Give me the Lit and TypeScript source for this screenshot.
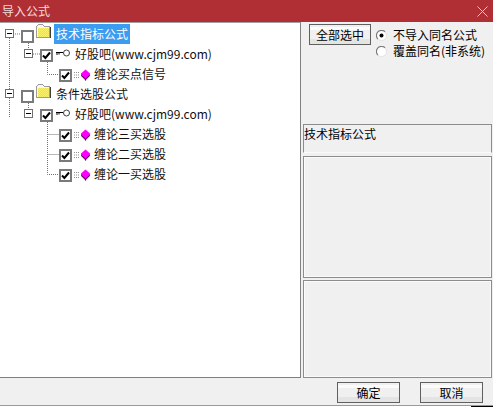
import { LitElement, html, css, svg } from "lit";
import { customElement } from "lit/decorators.js";

type Row = { level: 0 | 1 | 2; label: string; checked: boolean; selected?: boolean };

const rows: Row[] = [
  { level: 0, label: "技术指标公式", checked: false, selected: true },
  { level: 1, label: "好股吧(www.cjm99.com)", checked: true },
  { level: 2, label: "缠论买点信号", checked: true },
  { level: 0, label: "条件选股公式", checked: false },
  { level: 1, label: "好股吧(www.cjm99.com)", checked: true },
  { level: 2, label: "缠论三买选股", checked: true },
  { level: 2, label: "缠论二买选股", checked: true },
  { level: 2, label: "缠论一买选股", checked: true },
];

const folder = html`<svg class="ico folder" width="16" height="14" viewBox="0 0 16 14" shape-rendering="crispEdges">
  <defs>
    <pattern id="dither" width="2" height="2" patternUnits="userSpaceOnUse">
      <rect width="2" height="2" fill="#fbf06a"/>
      <rect width="1" height="1" fill="#d8d8b8"/>
      <rect x="1" y="1" width="1" height="1" fill="#d8d8b8"/>
    </pattern>
  </defs>
  <path d="M1.5 13.5V2.5L3.5 .5H7.5L9.5 2.5H14.5V13.5Z" fill="#f6f6f6" stroke="#9a9a9a"/>
  <rect x="3" y="4" width="11" height="9" fill="url(#dither)"/>
  <path d="M15.5 3v11H2" fill="none" stroke="#404040"/>
</svg>`;

const key = html`<svg class="ico key" width="16" height="8" viewBox="0 0 16 8">
  <circle cx="11.5" cy="4" r="3" fill="#fff" stroke="#404040"/>
  <path d="M8 3.5H1M2 3.5V6M4 3.5V5.5" stroke="#000" fill="none"/>
</svg>`;

const gem = html`<svg class="ico gem" width="16" height="12" viewBox="0 0 16 12">
  <path d="M0 3.5H6M0 6H6M0 8.5H6" stroke="#909090" stroke-dasharray="1 1"/>
  <path d="M11.5 .5L16 4.5V7L11.5 11.5L7 7V4.5Z" fill="#ff00ff"/>
  <path d="M7.5 6.5L11.5 10L15.5 6.5" fill="none" stroke="#500050"/>
  <path d="M11.5 10V11.5" stroke="#500050"/>
</svg>`;

const treeLines = svg`
  <path d="M9.5 38V90M9.5 98V118
           M13 34H21M33 54H40
           M28.5 43V50M28.5 103V110
           M47.5 62V74.5H59
           M47.5 122V174.5H59M47.5 134.5H59M47.5 154.5H59" 
        fill="none" stroke="#707070" stroke-dasharray="1 1"/>`;

const radio = (on: boolean) => html`<svg width="11" height="11" viewBox="0 0 11 11">
  <circle cx="5.5" cy="5.5" r="4.5" fill="#fff"/>
  <path d="M1.9 9.1A5 5 0 0 1 9.1 1.9" fill="none" stroke="#7a7a7a" stroke-width="1.2"/>
  <path d="M9.1 1.9A5 5 0 0 1 1.9 9.1" fill="none" stroke="#e4e4e4" stroke-width="1"/>
  ${on ? svg`<circle cx="5.5" cy="5.5" r="2" fill="#000"/>` : ""}
</svg>`;

@customElement("app-root")
export class AppRoot extends LitElement {
  static styles = css`
    :host {
      display: block;
      width: 493px;
      height: 407px;
      overflow: hidden;
      font-family: "Noto Sans CJK SC", "Liberation Sans", sans-serif;
      font-size: 12px;
      color: #000;
    }
    .win {
      height: 407px;
      display: flex;
      flex-direction: column;
      background: #f0f0f0;
    }
    .title {
      height: 22px;
      flex: none;
      background: #b02f35;
      color: #f4dcdc;
      display: flex;
      align-items: center;
      justify-content: space-between;
      padding: 0 5px 0 2px;
      line-height: 20px;
    }
    .title svg { display: block; }
    .main {
      flex: none;
      height: 356px;
      display: flex;
    }
    .tree {
      position: relative;
      width: 301px;
      flex: none;
      box-sizing: border-box;
      height: 356px;
      background: #fff;
      border-top: 1px solid #a0a0a0;
      border-right: 1px solid #808080;
      border-bottom: 1px solid #808080;
      padding-top: 1px;
    }
    .lines {
      position: absolute;
      left: 0;
      top: -23px;
      pointer-events: none;
    }
    .row {
      height: 20px;
      display: flex;
      align-items: center;
      white-space: nowrap;
      position: relative;
    }
    .l0 { padding-left: 5px; }
    .l1 { padding-left: 24px; }
    .l2 { padding-left: 59px; }
    .exp {
      width: 9px;
      height: 9px;
      box-sizing: border-box;
      border: 1px solid #707070;
      background: #fff;
      display: flex;
      align-items: center;
      justify-content: center;
      flex: none;
    }
    .exp::before {
      content: "";
      width: 5px;
      height: 1px;
      background: #000;
    }
    .l0 .exp { margin-right: 7px; margin-top: -1px; }
    .l1 .exp { margin-right: 7px; margin-top: -1px; }
    .chk {
      width: 13px;
      height: 13px;
      box-sizing: border-box;
      border: 2px solid #7a7a7a;
      background: #fff;
      flex: none;
      display: flex;
      align-items: center;
      justify-content: center;
      margin-top: 3px;
    }
    .chk svg { display: block; }
    .l0 .chk { margin-top: 4px; }
    .ico { flex: none; display: block; }
    .folder { margin: -7px 0 0 1px; }
    .key { margin: -3px 4px 0 2px; }
    .gem { margin: 1px 4px 0 2px; }
    .label {
      line-height: 20px;
      padding: 0 2px;
      color: #111;
    }
    .l1 .label, .l2 .label { padding: 0; }
    .l0 .label { margin-left: 3px; }
    .label.sel {
      background: #3b9cf0;
      color: #fff;
    }
    .side {
      flex: 1;
      display: flex;
      flex-direction: column;
      padding: 1px 1px 0 2px;
      min-width: 0;
    }
    .top {
      height: 101px;
      flex: none;
      display: flex;
      align-items: flex-start;
      gap: 5px;
      padding-left: 6px;
    }
    .btn {
      box-sizing: border-box;
      font: inherit;
      color: #000;
      border: 1px solid #606060;
      outline: none;
      padding: 0;
      background: linear-gradient(#f0f0f0 0 2px, #fbfbfb 2px 5px, #f0f0f0 5px 14px, #e4e4e2 14px);
      height: 21px;
      line-height: 18px;
    }
    .all { width: 62px; margin-top: 1px; }
    .opts {
      display: flex;
      flex-direction: column;
      margin-top: 4px;
    }
    .opt {
      display: flex;
      align-items: center;
      gap: 6px;
      height: 16px;
      line-height: 16px;
      white-space: nowrap;
    }
    .opt svg { flex: none; display: block; }
    .box {
      box-sizing: border-box;
      flex: none;
      border: 1px solid #8c8c8c;
      outline: 1px solid #fafafa;
      outline-offset: -2px;
    }
    .b1 {
      height: 29px;
      outline: none;
      border-bottom-color: #fafafa;
      line-height: 18px;
    }
    .b2 { height: 122px; margin-top: 3px; }
    .b3 { height: 98px; margin-top: 2px; }
    .foot {
      flex: none;
      height: 29px;
      display: flex;
      flex-direction: column;
    }
    .acts {
      flex: 1;
      display: flex;
      justify-content: flex-end;
      gap: 20px;
      padding: 4px 10px 0 0;
      border-bottom: 1px solid #9a9a9a;
    }
    .acts .btn { width: 63px; }
    .strip {
      flex: none;
      height: 1px;
      display: flex;
      background: #fff;
      justify-content: flex-end;
    }
    .strip span { width: 22px; background: #000; }
  `;

  private renderRow(r: Row) {
    return html`<div class="row l${r.level}">
      ${r.level < 2 ? html`<span class="exp"></span>` : ""}
      <span class="chk">
        ${r.checked
          ? html`<svg width="9" height="9" viewBox="0 0 9 9"><path d="M1 4.5L3.4 7L8 1.5" fill="none" stroke="#000" stroke-width="2"/></svg>`
          : ""}
      </span>
      ${r.level === 0 ? folder : r.level === 1 ? key : gem}
      <span class="label ${r.selected ? "sel" : ""}">${r.label}</span>
    </div>`;
  }

  render() {
    return html`<div class="win">
      <div class="title">
        <span>导入公式</span>
        <svg width="11" height="11" viewBox="0 0 11 11"><path d="M.5 .5L10.5 10.5M10.5 .5L.5 10.5" stroke="#e8c8c8" fill="none"/></svg>
      </div>
      <div class="main">
        <div class="tree">
          ${rows.map((r) => this.renderRow(r))}
          <svg class="lines" width="100" height="200" viewBox="0 0 100 200">${treeLines}</svg>
        </div>
        <div class="side">
          <div class="top">
            <button class="btn all">全部选中</button>
            <div class="opts">
              <div class="opt">${radio(true)}<span>不导入同名公式</span></div>
              <div class="opt">${radio(false)}<span>覆盖同名(非系统)</span></div>
            </div>
          </div>
          <div class="box b1">技术指标公式</div>
          <div class="box b2"></div>
          <div class="box b3"></div>
        </div>
      </div>
      <div class="foot">
        <div class="acts">
          <button class="btn">确定</button>
          <button class="btn">取消</button>
        </div>
        <div class="strip"><span></span></div>
      </div>
    </div>`;
  }
}
